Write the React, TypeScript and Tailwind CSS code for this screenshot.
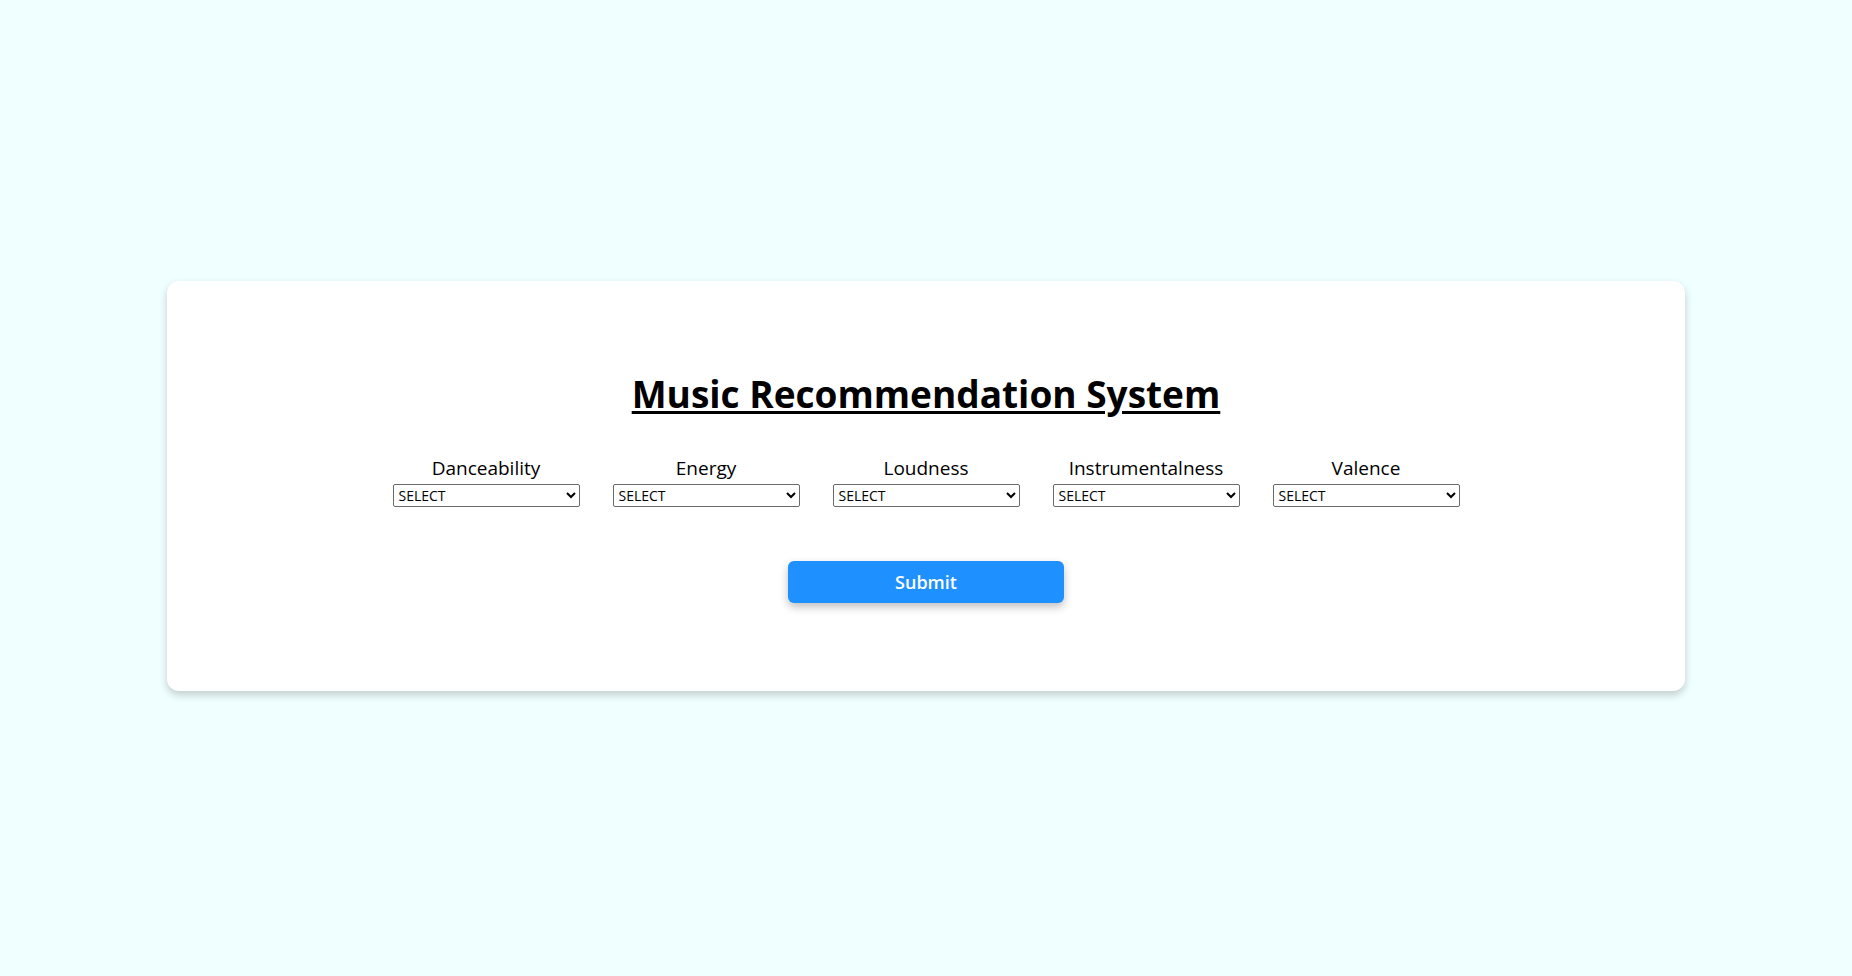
import React, { useState } from "react";

const fields = [
  "Danceability",
  "Energy",
  "Loudness",
  "Instrumentalness",
  "Valence",
];

const options = ["SELECT", "LOW", "MEDIUM", "HIGH"];

const App = () => {
  const [values, setValues] = useState<Record<string, string>>({});

  return (
    <div className="flex min-h-screen items-center justify-center bg-[#f0ffff] pb-[4px] font-['Open_Sans',sans-serif] text-black">
      <div className="flex w-[1518px] flex-col items-center rounded-xl bg-white pt-[86px] pb-[88px] shadow-[0_4px_8px_rgba(0,0,0,0.2)]">
        <h1 className="text-[37px] leading-[54px] font-bold underline decoration-[3px] underline-offset-[3px]">
          Music Recommendation System
        </h1>
        <div className="mt-[33px] flex gap-[33px]">
          {fields.map((name) => (
            <div key={name} className="flex flex-col items-center">
              <label className="text-[19px] leading-[28px]">{name}</label>
              <select
                value={values[name] ?? "SELECT"}
                onChange={(e) =>
                  setValues({ ...values, [name]: e.target.value })
                }
                className="mt-[2px] h-[23px] w-[187px] rounded-[2px] border border-[#6b6b6b] bg-white px-[1px] text-[14px] text-black"
              >
                {options.map((o) => (
                  <option key={o} value={o}>
                    {o}
                  </option>
                ))}
              </select>
            </div>
          ))}
        </div>
        <button className="mt-[54px] h-[42px] w-[276px] rounded-md bg-[#1e90ff] text-[18px] font-semibold text-white shadow-[0_4px_8px_rgba(0,0,0,0.25)]">
          Submit
        </button>
      </div>
    </div>
  );
};

export default App;
